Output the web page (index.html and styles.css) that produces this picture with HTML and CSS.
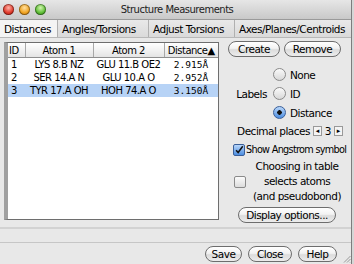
FILE: index.html
```html
<!DOCTYPE html>
<html lang="en">
<head>
  <meta charset="UTF-8">
  <title>Structure Measurements</title>
  <link rel="stylesheet" href="styles.css">
</head>
<body>
  <div class="window">

    <!-- Title bar -->
    <div class="titlebar">
      <div class="lights">
        <span class="light red"></span>
        <span class="light amber"></span>
        <span class="light green"></span>
      </div>
      <div class="title">Structure Measurements</div>
    </div>

    <!-- Tabs -->
    <div class="tabs">
      <div class="tab active">Distances</div>
      <div class="tab">Angles/Torsions</div>
      <div class="tab">Adjust Torsions</div>
      <div class="tab last">Axes/Planes/Centroids</div>
    </div>

    <!-- Distances pane -->
    <div class="pane">
      <div class="table-wrap">
        <table class="dist">
          <thead>
            <tr>
              <th class="c-id">ID</th>
              <th class="c-a1">Atom 1</th>
              <th class="c-a2">Atom 2</th>
              <th class="c-d">Distance&#9650;</th>
            </tr>
          </thead>
          <tbody>
            <tr>
              <td class="c-id">1</td>
              <td>LYS 8.B NZ</td>
              <td>GLU 11.B OE2</td>
              <td class="num">2.915&#197;</td>
            </tr>
            <tr>
              <td class="c-id">2</td>
              <td>SER 14.A N</td>
              <td>GLU 10.A O</td>
              <td class="num">2.952&#197;</td>
            </tr>
            <tr class="selected">
              <td class="c-id">3</td>
              <td>TYR 17.A OH</td>
              <td>HOH 74.A O</td>
              <td class="num">3.150&#197;</td>
            </tr>
          </tbody>
        </table>
      </div>

      <div class="side">
        <div class="btn-row">
          <button class="btn">Create</button>
          <button class="btn">Remove</button>
        </div>

        <div class="labels">
          <span class="labels-title">Labels</span>
          <div class="radios">
            <div class="radio"><span class="dot"></span>None</div>
            <div class="radio"><span class="dot"></span>ID</div>
            <div class="radio"><span class="dot on"></span>Distance</div>
          </div>
        </div>

        <div class="decimal">
          Decimal places
          <span class="stepper">
            <span class="arrow">&#9666;</span>
            <span class="val">3</span>
            <span class="arrow">&#9656;</span>
          </span>
        </div>

        <div class="check">
          <span class="box on">
            <svg width="12" height="12" viewBox="0 0 12 12"><path d="M2.5 6.2 L5 9 L10.5 1.5" fill="none" stroke="#111" stroke-width="1.8"/></svg>
          </span>
          Show Angstrom symbol
        </div>

        <div class="choose">
          <span class="box"></span>
          <div class="choose-text">Choosing in table<br>selects atoms<br>(and pseudobond)</div>
        </div>

        <button class="btn wide">Display options...</button>
      </div>
    </div>

    <!-- Dialog buttons -->
    <div class="footer">
      <button class="btn save">Save</button>
      <button class="btn close">Close</button>
      <button class="btn help">Help</button>
      <svg class="grip" width="8" height="8" viewBox="0 0 8 8">
        <path d="M7.5 1 L1 7.5 M7.5 4 L4 7.5 M7.5 7 L7 7.5" stroke="#999" stroke-width="1"/>
      </svg>
    </div>

  </div>
</body>
</html>
```

FILE: styles.css
```css
/* Mac-style dialog */
body {
  margin: 0;
  background: #d6d6d6;
  font-family: "DejaVu Sans", sans-serif;
  font-size: 10px;
  letter-spacing: -0.5px;
  color: #000;
}

.window {
  width: 351px;
  height: 264px;
  background: #e8e8e8;
  border-right: 1px solid #7d7d7d;
  display: flex;
  flex-direction: column;
  overflow: hidden;
  white-space: nowrap;
}

/* title bar */
.titlebar {
  height: 19px;
  background: linear-gradient(#e6e6e6, #c9c9c9);
  border-bottom: 1px solid #9a9a9a;
  display: flex;
  align-items: center;
}

.lights {
  display: flex;
  gap: 5px;
  padding-left: 3px;
  width: 100px;
}

.light {
  width: 11px;
  height: 11px;
  border-radius: 50%;
  box-shadow: inset 0 0 0 1px rgba(0,0,0,0.35);
}
.red { background: radial-gradient(circle at 50% 35%, #ffb3a8, #e0392a 55%, #9c1a12); }
.amber { background: radial-gradient(circle at 50% 35%, #ffe0a0, #f0a321 55%, #a8640a); }
.green { background: radial-gradient(circle at 50% 35%, #d3f5b0, #5fbf37 55%, #2f7a16); }

.title {
  flex: 1;
  padding-right: 100px;
  text-align: center;
  font-size: 10px;
  color: #222;
}

/* tabs */
.tabs {
  height: 17px;
  display: flex;
  background: #e3e3e3;
  border-bottom: 1px solid #b8b8b8;
}

.tab {
  padding: 0 4px;
  display: flex;
  align-items: center;
  border-right: 1px solid #b0b0b0;
  background: linear-gradient(#e9e9e9, #dadada);
  font-size: 10.5px;
}
.tab.active {
  background: #f4f4f4;
  width: 49px;
}
.tab:nth-child(2) { width: 82px; }
.tab:nth-child(3) { width: 77px; }
.tab.last { flex: 1; border-right: none; }

/* main pane */
.pane {
  height: 185px;
  display: flex;
  padding: 4px 0 0 4px;
  border-bottom: 2px solid #d2d2d2;
}

.table-wrap {
  flex-shrink: 0;
  width: 210px;
  height: 176px;
  background: #fff;
  border: 1px solid #6e6e6e;
  border-left: 4px solid #a0a0a0;
}

.dist {
  border-collapse: collapse;
  width: 100%;
  font-size: 10px;
}

.dist th {
  height: 14px;
  padding: 0;
  font-weight: normal;
  background: linear-gradient(#ffffff, #e4e4e4);
  border-right: 1px solid #a8a8a8;
  border-bottom: 1px solid #8e8e8e;
}
.dist th:last-child { border-right: none; }

.dist td {
  height: 13px;
  padding: 0;
  text-align: center;
  line-height: 13px;
}

.dist .c-id { width: 14px; text-align: left; padding-left: 3px; }
.dist th.c-id { padding-left: 1px; }
.dist .c-a1 { width: 67px; }
.dist .c-a2 { width: 70px; }

.dist .num {
  font-family: "DejaVu Sans Mono", monospace;
  font-size: 9.5px;
  letter-spacing: 0;
}

.dist tr.selected td { background: #b7d3f6; }

/* right side controls */
.side {
  flex: 1;
  min-width: 0;
  display: flex;
  flex-direction: column;
  align-items: center;
}

.btn {
  font-family: "DejaVu Sans", sans-serif;
  font-size: 10.5px;
  letter-spacing: -0.5px;
  color: #000;
  height: 16px;
  padding: 0 7px;
  border: 1px solid #6d6d6d;
  border-radius: 8px;
  background: linear-gradient(#ffffff, #f2f2f2 45%, #dcdcdc 55%, #ececec);
  line-height: 14px;
  white-space: nowrap;
}

.btn-row {
  display: flex;
  gap: 4px;
  margin-top: -1px;
  margin-left: -1px;
}
.btn-row .btn:first-child { width: 52px; }
.btn-row .btn:last-child { width: 57px; }

.labels {
  display: flex;
  align-items: center;
  gap: 6px;
  margin-top: 11px;
  margin-left: -2px;
}

.radios {
  display: flex;
  flex-direction: column;
  gap: 6px;
}

.radio {
  display: flex;
  align-items: center;
  gap: 4px;
  height: 13px;
  font-size: 10.5px;
}

.dot {
  width: 11px;
  height: 11px;
  border-radius: 50%;
  border: 1px solid #8a8a8a;
  background: linear-gradient(#fafafa, #d8d8d8);
}
.dot.on {
  border-color: #3a5f99;
  background: radial-gradient(circle, #111 0 2px, transparent 2.5px), linear-gradient(#b8d6fa, #4d8ee0);
}

.labels-title { font-size: 10.5px; }

.decimal {
  margin-top: 5px;
  height: 13px;
  display: flex;
  align-items: center;
  gap: 3px;
  font-size: 10.5px;
  margin-left: 10px;
}

.stepper {
  display: flex;
  align-items: center;
  gap: 2px;
}
.arrow {
  width: 7px;
  height: 8px;
  border: 1px solid #999;
  background: #f4f4f4;
  font-size: 7px;
  line-height: 8px;
  text-align: center;
  letter-spacing: 0;
}
.val { width: 8px; text-align: center; }

.check {
  align-self: flex-start;
  margin: 6px 0 0 14px;
  height: 13px;
  display: flex;
  align-items: center;
  gap: 1px;
  font-size: 9.7px;
  letter-spacing: -0.7px;
}

.box {
  width: 10px;
  height: 10px;
  border: 1px solid #8a8a8a;
  border-radius: 2px;
  background: linear-gradient(#fbfbfb, #dcdcdc);
  display: flex;
  flex-shrink: 0;
}
.box.on {
  border-color: #3a5f99;
  background: linear-gradient(#b8d6fa, #4d8ee0);
}
.box svg { margin: -1px 0 0 0; }

.choose {
  align-self: flex-start;
  margin: 3px 0 0 15px;
  display: flex;
  align-items: center;
  gap: 7px;
}
.choose-text {
  text-align: center;
  font-size: 10.5px;
  line-height: 15px;
}

.btn.wide {
  margin-top: 3px;
  width: 98px;
  margin-left: 4px;
}

/* footer */
.footer {
  margin-top: 13px;
  border-top: 1px solid #c6c6c6;
  flex: 1;
  display: flex;
  align-items: center;
  justify-content: flex-end;
  gap: 6px;
}
.footer .btn { padding: 0; }
.footer .save { width: 37px; }
.footer .close { width: 44px; }
.footer .help { width: 39px; }
.grip { align-self: flex-end; margin-bottom: 1px; }
```
